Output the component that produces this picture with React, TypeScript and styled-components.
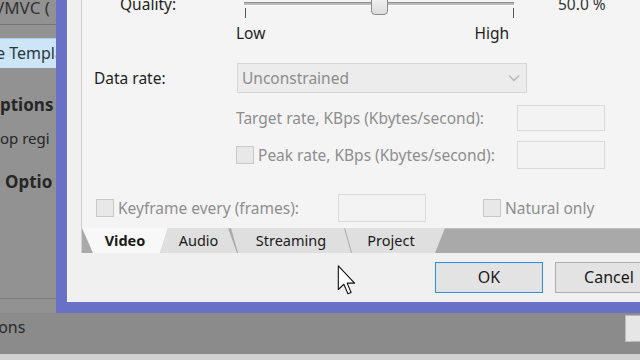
import React, { FC } from 'react';
import styled, { createGlobalStyle } from 'styled-components';

const Global = createGlobalStyle`
  html, body {
    margin: 0;
    padding: 0;
    background: #8c8c8c;
  }

  body {
    font-family: 'Noto Sans', 'Open Sans', sans-serif;
  }
`;

const Screen = styled.div`
  width: 640px;
  height: 360px;
  overflow: hidden;
  display: flex;
  flex-direction: column;
  position: relative;
`;

const TopArea = styled.div`
  height: 313px;
  display: flex;
`;

// app panel behind the dialog
const SidePanel = styled.div`
  width: 56px;
  flex: none;
  background: #929292;
  overflow: hidden;
  display: flex;
  flex-direction: column;
  white-space: nowrap;
  color: #262626;
`;

const SideTitle = styled.div`
  height: 24px;
  border-bottom: 1px solid #747474;
  font-size: 17px;
  line-height: 16px;
  margin-left: -6px;
  color: #333;
`;

const SideSelected = styled.div`
  margin-top: 13px;
  height: 29px;
  background: #cce5f7;
  border-top: 1px solid #a9cbe6;
  font-size: 16px;
  line-height: 29px;
  margin-left: -4px;
  color: #2b3640;
`;

const SideText = styled.div<{ $bold?: boolean; $top: number; $indent?: number }>`
  margin-top: ${p => p.$top}px;
  font-size: ${p => (p.$bold ? 17 : 15)}px;
  font-weight: ${p => (p.$bold ? 700 : 400)};
  line-height: 20px;
  padding-left: ${p => p.$indent || 0}px;
`;

const SideRule = styled.div`
  margin-top: auto;
  margin-bottom: 14px;
  border-top: 1px solid #7a7a7a;
`;

const Dialog = styled.div`
  flex: 1;
  min-width: 0;
  background: #f0f0f0;
  border-left: 11px solid #6971c6;
  border-bottom: 11px solid #6971c6;
  overflow: hidden;
  display: flex;
  flex-direction: column;
  padding-left: 14px;
  box-shadow: inset 1px 0 0 #fafafa;
`;

const Panel = styled.div`
  height: 253px;
  border-left: 1px solid #cfcfcf;
  background: #f4f4f4;
  display: flex;
  flex-direction: column;
`;

const Form = styled.div`
  height: 228px;
  overflow: hidden;
  padding-left: 12px;
  font-size: 15.5px;
  color: #1e1e1e;
`;

const FormInner = styled.div`
  margin-top: -10px;
  display: flex;
  flex-direction: column;
`;

const Row = styled.div<{ $top?: number; $h: number }>`
  margin-top: ${p => p.$top || 0}px;
  height: ${p => p.$h}px;
  display: flex;
  align-items: center;
  white-space: nowrap;
`;

const Label = styled.span<{ $w?: number; $indent?: number; $muted?: boolean }>`
  width: ${p => (p.$w ? `${p.$w}px` : 'auto')};
  flex: none;
  padding-left: ${p => p.$indent || 0}px;
  box-sizing: border-box;
  color: ${p => (p.$muted ? '#8e8e8e' : '#1e1e1e')};
  line-height: 18px;
`;

const SliderBox = styled.div`
  width: 286px;
  height: 28px;
  flex: none;
  position: relative;
`;

const Track = styled.div`
  position: absolute;
  left: 8px;
  right: 8px;
  top: 12px;
  height: 3px;
  background: #b9b9b9;
  border-bottom: 1px solid #fff;
  box-shadow: inset 0 1px 0 #8f8f8f;
`;

const Thumb = styled.div`
  position: absolute;
  left: 135px;
  top: 7px;
  width: 17px;
  height: 18px;
  background: linear-gradient(#f2f2f2, #dcdcdc);
  border: 1px solid #8a8a8a;
  border-radius: 2px 2px 4px 4px;
  box-sizing: border-box;
`;

const Tick = styled.div<{ $left: number }>`
  position: absolute;
  left: ${p => p.$left}px;
  top: 18px;
  width: 1px;
  height: 10px;
  background: #555;
`;

const Value = styled.span`
  margin-left: 36px;
  color: #333;
`;

const ScaleRow = styled.div`
  margin-top: 7px;
  height: 16px;
  width: 273px;
  margin-left: 142px;
  display: flex;
  justify-content: space-between;
  line-height: 16px;
`;

const Select = styled.div`
  width: 290px;
  height: 30px;
  margin-left: 1px;
  box-sizing: border-box;
  background: #ececec;
  border: 1px solid #d6d6d6;
  display: flex;
  align-items: center;
  justify-content: space-between;
  padding: 0 6px 0 4px;
  color: #8c8c8c;
`;

const Field = styled.div<{ $w: number; $h: number }>`
  width: ${p => p.$w}px;
  height: ${p => p.$h}px;
  flex: none;
  box-sizing: border-box;
  background: #f3f3f3;
  border: 1px solid #dadada;
`;

const Check = styled.div<{ $left?: number }>`
  width: 18px;
  height: 18px;
  flex: none;
  margin-left: ${p => p.$left || 0}px;
  margin-right: 4px;
  box-sizing: border-box;
  background: #e8e8e8;
  border: 1px solid #c9c9c9;
`;

const TabStrip = styled.div`
  height: 25px;
  background: #a9a9a9;
  border-top: 1px solid #bdbdbd;
  box-sizing: border-box;
  display: flex;
`;

const Tab = styled.div<{ $w: number; $shift: number; $clip: string; $active?: boolean; $indent: number }>`
  width: ${p => p.$w}px;
  margin-left: ${p => p.$shift}px;
  flex: none;
  margin-top: -1px;
  height: 25px;
  clip-path: polygon(${p => p.$clip});
  background: ${p => (p.$active ? '#f8f8f8' : '#dfdfdf')};
  font-size: 14.5px;
  font-weight: ${p => (p.$active ? 700 : 400)};
  color: #1a1a1a;
  line-height: 25px;
  text-align: center;
  text-indent: ${p => p.$indent}px;
  box-sizing: border-box;
  position: relative;
  z-index: ${p => (p.$active ? 2 : 1)};
`;

const ButtonRow = styled.div`
  height: 49px;
  display: flex;
  gap: 12px;
  padding-left: 354px;
  padding-top: 9px;
  box-sizing: border-box;
`;

const Button = styled.div<{ $primary?: boolean }>`
  width: 108px;
  height: 31px;
  flex: none;
  box-sizing: border-box;
  background: #e3e3e3;
  border: 1px solid ${p => (p.$primary ? '#3d8ad6' : '#adadad')};
  box-shadow: ${p => (p.$primary ? 'inset 0 0 0 1px #cfe3f5' : 'none')};
  font-size: 16px;
  line-height: 29px;
  text-align: center;
  color: #1a1a1a;
`;

const BottomBar = styled.div`
  flex: 1;
  display: flex;
  flex-direction: column;
`;

const BottomRow = styled.div`
  flex: 1;
  display: flex;
  justify-content: space-between;
  align-items: flex-start;
  background: #8b8b8b;
`;

const BottomText = styled.span`
  margin-top: 4px;
  margin-left: -6px;
  font-size: 16px;
  line-height: 20px;
  color: #2a2a2a;
`;

const SideButton = styled.div`
  margin-top: 2px;
  width: 14px;
  height: 25px;
  background: #e6e6e6;
  border: 1px solid #bcbcbc;
  border-right: none;
`;

const BottomEdge = styled.div`
  height: 6px;
  background: #d2d2d2;
`;

const Cursor = styled.svg`
  position: absolute;
  left: 337px;
  top: 265px;
`;

const Chevron: FC = () => (
  <svg width="12" height="8" viewBox="0 0 12 8">
    <path d="M1 1.5 L6 6.5 L11 1.5" fill="none" stroke="#b5b5b5" strokeWidth="1.4" />
  </svg>
);

const App: FC = () => {
  return (
    <Screen>
      <Global />
      <TopArea>
        <SidePanel>
          <SideTitle>VMVC (</SideTitle>
          <SideSelected>e Templa</SideSelected>
          <SideText $bold $top={27} $indent={0}>ptions</SideText>
          <SideText $top={13}>op regi</SideText>
          <SideText $bold $top={24} $indent={5}>Optio</SideText>
          <SideRule />
        </SidePanel>

        <Dialog>
          <Panel>
            <Form>
              <FormInner>
                <Row $h={28}>
                  <Label $w={142} $indent={26}>Quality:</Label>
                  <SliderBox>
                    <Track />
                    <Tick $left={9} />
                    <Tick $left={277} />
                    <Thumb />
                  </SliderBox>
                  <Value>50.0 %</Value>
                </Row>
                <ScaleRow>
                  <span>Low</span>
                  <span>High</span>
                </ScaleRow>
                <Row $top={22} $h={30}>
                  <Label $w={142}>Data rate:</Label>
                  <Select>
                    <span>Unconstrained</span>
                    <Chevron />
                  </Select>
                </Row>
                <Row $top={12} $h={26}>
                  <Label $w={142} />
                  <Label $w={281} $muted>Target rate, KBps (Kbytes/second):</Label>
                  <Field $w={88} $h={26} />
                </Row>
                <Row $top={10} $h={28}>
                  <Label $w={142} />
                  <Check />
                  <Label $w={259} $muted>Peak rate, KBps (Kbytes/second):</Label>
                  <Field $w={88} $h={28} />
                </Row>
                <Row $top={24} $h={29}>
                  <Check $left={2} />
                  <Label $w={220} $muted>Keyframe every (frames):</Label>
                  <Field $w={88} $h={28} />
                  <Check $left={57} />
                  <Label $muted>Natural only</Label>
                </Row>
              </FormInner>
            </Form>
            <TabStrip>
              <Tab $active $w={86} $shift={0} $indent={0} $clip="0 0, 86px 0, 78px 100%, 11px 100%">Video</Tab>
              <Tab $w={77} $shift={-8} $indent={0} $clip="8px 0, 68px 0, 77px 100%, 0 100%">Audio</Tab>
              <Tab $w={120} $shift={-6} $indent={0} $clip="0 0, 113px 0, 120px 100%, 7px 100%">Streaming</Tab>
              <Tab $w={100} $shift={-6} $indent={-8} $clip="0 0, 100px 0, 90px 100%, 7px 100%">Project</Tab>
            </TabStrip>
          </Panel>
          <ButtonRow>
            <Button $primary>OK</Button>
            <Button>Cancel</Button>
          </ButtonRow>
        </Dialog>
      </TopArea>

      <BottomBar>
        <BottomRow>
          <BottomText>ions</BottomText>
          <SideButton />
        </BottomRow>
        <BottomEdge />
      </BottomBar>

      <Cursor width="20" height="30" viewBox="0 0 12 19">
        <path d="M0.5 0.5 L0.5 15.5 L4 12.2 L6.6 18.2 L8.6 17.4 L6.1 11.5 L10.8 11.5 Z" fill="#fff" stroke="#111" strokeWidth="0.7" strokeLinejoin="round" />
      </Cursor>
    </Screen>
  );
};

export default App;
